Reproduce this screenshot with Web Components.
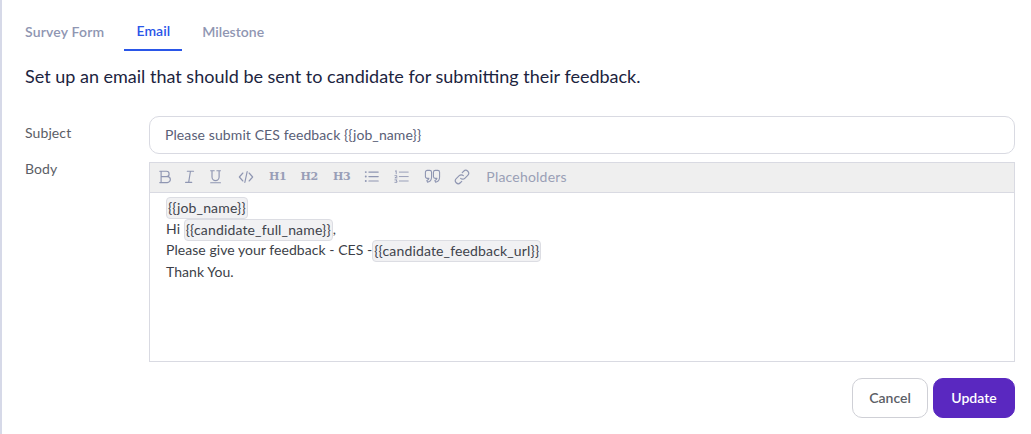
<!DOCTYPE html>
<html><head><meta charset="utf-8">
<style>html,body{margin:0;padding:0;background:#fff;font-family:Lato,"Liberation Sans",sans-serif}</style>
</head><body>
<feedback-page></feedback-page>
<script>
const FONT='Lato,"Liberation Sans",sans-serif';
const ic={
B:'<path d="M3.500 2.500h6a3 3 0 0 1 0 6h-6zM3.500 8.500h7a3.400 3.400 0 0 1 0 6.800h-7zM2 2.500h2M2 15.300h2" fill="none"/>',
I:'<path d="M6 2.500h7M4 15h7M9.500 2.500 7.500 15" fill="none"/>',
U:'<path d="M3 2h4M10 2h4M4.500 2v7a4 4 0 0 0 8 0V2M3 15.500h11" fill="none"/>',
code:'<path d="M5.500 4.500 1.500 9l4 4.500M12.500 4.500l4 4.500-4 4.500M10.300 3 7.700 15" fill="none"/>',
ul:'<g fill="none"><path d="M5.500 3.500H16M5.500 8.500H16M5.500 13.500H16"/></g><circle cx="2" cy="3.500" r="1.100" fill="currentColor" stroke="none"/><circle cx="2" cy="8.500" r="1.100" fill="currentColor" stroke="none"/><circle cx="2" cy="13.500" r="1.100" fill="currentColor" stroke="none"/>',
ol:'<path d="M6 3.500h10M6 8.500h10M6 13.500h10M1.500 2.500l1-.7v3.600M1 7.500h2.200v1.300L1 10h2.400M1 12.200h2.300l-1 1.200h1v1.600H1" fill="none" stroke-width="1"/>',
q:'<path d="M1.500 4.500a2 2 0 0 1 2-2H6a2 2 0 0 1 2 2v5c0 3-1.500 5-4.200 5.500l-.8-1.700c1.300-.4 2-1.200 2.200-2.300H3.500a2 2 0 0 1-2-2zM10 4.500a2 2 0 0 1 2-2h2.500a2 2 0 0 1 2 2v5c0 3-1.500 5-4.200 5.500l-.8-1.700c1.300-.4 2-1.200 2.200-2.300H12a2 2 0 0 1-2-2z" fill="none"/>',
link:'<path d="M7.500 10.500a3.200 3.200 0 0 0 4.600 0l3.400-3.400a3.250 3.250 0 0 0-4.600-4.600L9.300 4.100M10.500 7.500a3.200 3.200 0 0 0-4.600 0l-3.400 3.400a3.250 3.250 0 0 0 4.600 4.600L8.700 13.900" fill="none"/>'
};
function def(name,css,html){
  customElements.define(name,class extends HTMLElement{
    constructor(){super();const s=this.attachShadow({mode:'open'});s.innerHTML='<style>'+css+'</style>'+(typeof html==='function'?html(this):html);}
  });
}
def('tab-item',`:host{display:block;box-sizing:border-box;height:32px;padding:4px 13px 0;border-bottom:2px solid transparent;font:600 14px/18px ${FONT};color:#8f96b2;letter-spacing:.18px}
:host([active]){color:#2a56e8;border-bottom-color:#2a56e8;padding:3px 12px 0;letter-spacing:.1px}
:host(:first-child){padding-left:0;margin-right:7px}
:host(:last-child){margin-left:7px;letter-spacing:0}`,'<slot></slot>');
def('tab-bar',`:host{display:flex;align-items:flex-start;height:32px;}`,'<slot></slot>');
def('form-row',`:host{display:flex;align-items:flex-start;}
.l{box-sizing:border-box;width:124px;flex:none;font:400 14px/18px ${FONT};color:#5b5e66;letter-spacing:.1px}
.c{flex:1;min-width:0}`,'<div class="l"><slot name="label"></slot></div><div class="c"><slot></slot></div>');
def('text-field',`:host{display:flex;align-items:center;box-sizing:border-box;height:38px;border:1px solid #d9dae2;border-radius:10px;padding:0 15px;font:400 14px/18px ${FONT};color:#5a6077;background:#fff;letter-spacing:.1px}`,'<slot></slot>');
def('tool-icon',`:host{display:inline-flex;color:#8f96b2;margin:0}svg{display:block;width:var(--s,16px);height:var(--s,16px);stroke:currentColor;stroke-width:var(--w,1.3);stroke-linecap:round;stroke-linejoin:round}`,
  el=>`<svg viewBox="0 0 18 18">${ic[el.getAttribute('name')]}</svg>`);
def('tool-h',`:host{display:inline-block;font:700 11px/14px "DejaVu Serif","Liberation Serif",serif;color:#989eb7;letter-spacing:-.3px}`,'<slot></slot>');
def('tool-bar',`:host{display:flex;align-items:center;box-sizing:border-box;height:31px;background:#efefef;border:1px solid #d9dae2;padding:0 0 2px 8px;font:400 14px/18px ${FONT};color:#9a9fb6;letter-spacing:.2px}
::slotted(*){flex:none}`,'<slot></slot>');
def('place-holder',`:host{display:inline-block;box-sizing:border-box;background:#f1f1f3;border:1px solid #dcdde3;border-radius:4px;padding:0 1px;line-height:20px;height:22px;vertical-align:middle;color:#40434c;letter-spacing:.15px}`,'<slot></slot>');
def('editor-body',`:host{display:block;box-sizing:border-box;height:169px;border:1px solid #d9dae2;border-top:0;padding:3px 16px;font:400 14px/21.5px ${FONT};color:#3c3f48;background:#fff;letter-spacing:.05px}
::slotted(div){height:21.5px}`,'<slot></slot>');
def('ui-button',`:host{display:inline-flex;align-items:center;justify-content:center;box-sizing:border-box;height:40px;border-radius:10px;font:600 14px/18px ${FONT};border:1px solid #cfd0d6;color:#5b5e66;background:#fff;width:76px}
:host([primary]){background:#5a28c0;border-color:#5a28c0;color:#fff;width:82px}`,'<slot></slot>');
def('feedback-page',`:host{display:block;box-sizing:border-box;height:434px;border-left:2px solid #d6d9e8;padding:19px 16px 0 23px;background:#fff}
.h{font:400 18px/24px ${FONT};color:#1c2440;margin:13px 0 28px}
.gap{height:8px}
.f{display:flex;justify-content:flex-end;gap:5px;margin-top:16px}`,`
<tab-bar><tab-item>Survey Form</tab-item><tab-item active>Email</tab-item><tab-item>Milestone</tab-item></tab-bar>
<div class="h">Set up an email that should be sent to candidate for submitting their feedback.</div>
<form-row><span slot="label" style="display:block;padding-top:8px">Subject</span><text-field>Please submit CES feedback {{job_name}}</text-field></form-row>
<div class="gap"></div>
<form-row><span slot="label" style="display:block;margin-top:-2px">Body</span>
<tool-bar>
<tool-icon name="B" style="margin-right:8px"></tool-icon><tool-icon name="I" style="margin-right:10px"></tool-icon><tool-icon name="U" style="margin-right:14px"></tool-icon><tool-icon name="code" style="margin-right:15px"></tool-icon>
<tool-h style="margin-right:14px">H1</tool-h><tool-h style="margin-right:15px">H2</tool-h><tool-h style="margin-right:14px">H3</tool-h>
<tool-icon name="ul" style="margin-right:14px"></tool-icon><tool-icon name="ol" style="margin-right:14px"></tool-icon><tool-icon name="q" style="--s:17px;--w:1.15;margin-right:13px"></tool-icon><tool-icon name="link" style="--s:16px;margin-right:16px"></tool-icon><span>Placeholders</span>
</tool-bar>
<editor-body>
<div><place-holder>{{job_name}}</place-holder></div>
<div>Hi <place-holder>{{candidate_full_name}}</place-holder>,</div>
<div>Please give your feedback - CES -<place-holder>{{candidate_feedback_url}}</place-holder></div>
<div>Thank You.</div>
</editor-body>
</form-row>
<div class="f"><ui-button>Cancel</ui-button><ui-button primary>Update</ui-button></div>`);
</script>
</body></html>
